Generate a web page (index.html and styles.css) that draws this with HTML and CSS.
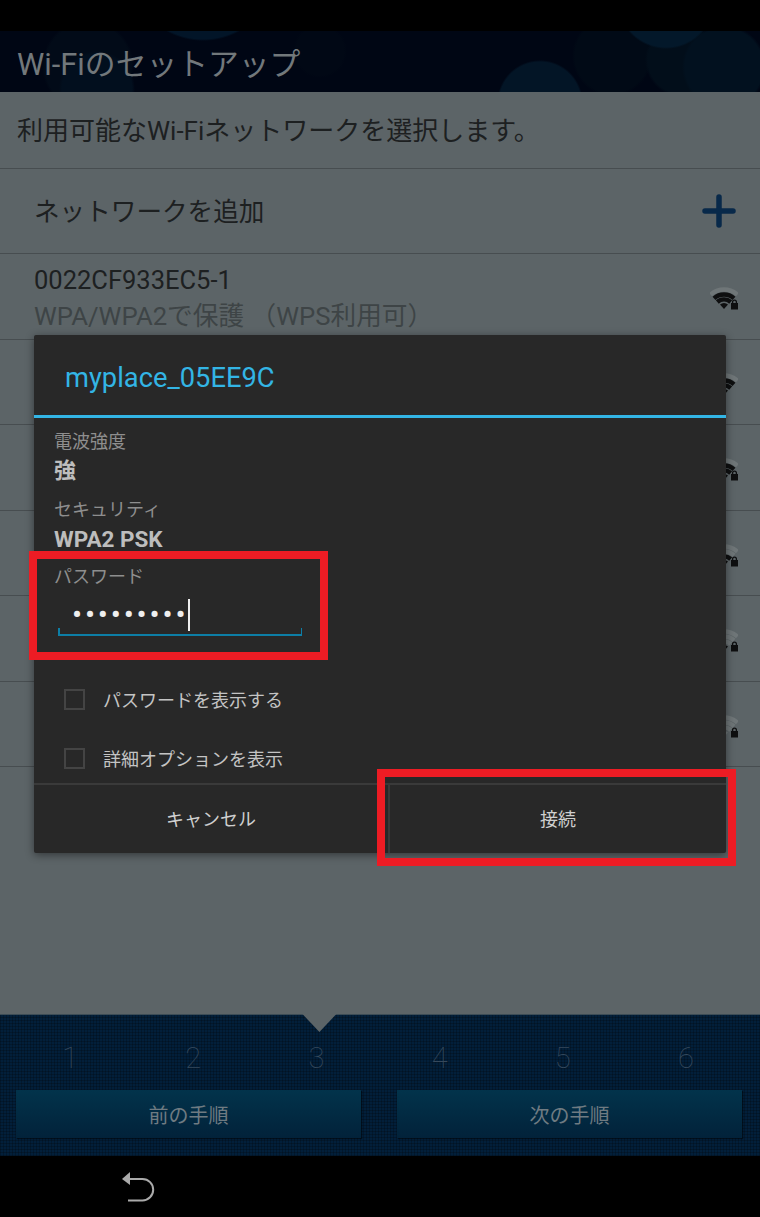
FILE: index.html
```html
<!DOCTYPE html>
<html lang="ja">
<head>
    <meta charset="utf-8">
    <title>Wi-Fiのセットアップ</title>
    <link rel="stylesheet" href="styles.css">
</head>
<body>
    <svg class="defs" width="0" height="0">
        <defs>
            <g id="lock">
                <path class="lock-body" d="M21 16h7v6.5h-7z"/>
                <path class="lock-loop" d="M22.6 16.5v-1.4a1.9 1.9 0 0 1 3.8 0v1.4"/>
            </g>
        </defs>
    </svg>

    <div class="status-bar"></div>
    <header class="app-header"><h1>Wi-Fiのセットアップ</h1></header>

    <main class="content">
        <p class="intro">利用可能なWi-Fiネットワークを選択します。</p>
        <div class="add-row">
            <span>ネットワークを追加</span>
            <svg class="plus" width="34" height="34" viewBox="0 0 34 34"><path d="M3 17h28M17 3v28"/></svg>
        </div>
        <div class="net-row">
            <div class="net-text">
                <div class="net-name">0022CF933EC5-1</div>
                <div class="net-sub">WPA/WPA2で保護 （WPS利用可）</div>
            </div>
            <svg class="wifi" viewBox="0 0 28 24"><path d="M.6 7.6a20 20 0 0 1 26.8 0"/><path class="on" d="M4 11.3a15 15 0 0 1 20 0"/><path class="on" d="M7.3 15a10 10 0 0 1 13.4 0"/><path class="on fill" d="M14 22l-4-4.5a6 6 0 0 1 8 0z"/><use href="#lock"/></svg>
        </div>
        <div class="net-row">
            <svg class="wifi" viewBox="0 0 28 24"><path d="M.6 7.6a20 20 0 0 1 26.8 0"/><path class="on" d="M4 11.3a15 15 0 0 1 20 0"/><path class="on" d="M7.3 15a10 10 0 0 1 13.4 0"/><path class="on fill" d="M14 22l-4-4.5a6 6 0 0 1 8 0z"/></svg>
        </div>
        <div class="net-row">
            <svg class="wifi" viewBox="0 0 28 24"><path d="M.6 7.6a20 20 0 0 1 26.8 0"/><path class="on" d="M4 11.3a15 15 0 0 1 20 0"/><path class="on" d="M7.3 15a10 10 0 0 1 13.4 0"/><path class="on fill" d="M14 22l-4-4.5a6 6 0 0 1 8 0z"/><use href="#lock"/></svg>
        </div>
        <div class="net-row">
            <svg class="wifi" viewBox="0 0 28 24"><path d="M.6 7.6a20 20 0 0 1 26.8 0"/><path d="M4 11.3a15 15 0 0 1 20 0"/><path class="on" d="M7.3 15a10 10 0 0 1 13.4 0"/><path class="on fill" d="M14 22l-4-4.5a6 6 0 0 1 8 0z"/><use href="#lock"/></svg>
        </div>
        <div class="net-row">
            <svg class="wifi" viewBox="0 0 28 24"><path d="M.6 7.6a20 20 0 0 1 26.8 0"/><path d="M4 11.3a15 15 0 0 1 20 0"/><path d="M7.3 15a10 10 0 0 1 13.4 0"/><path class="on fill" d="M14 22l-4-4.5a6 6 0 0 1 8 0z"/><use href="#lock"/></svg>
        </div>
        <div class="net-row">
            <svg class="wifi" viewBox="0 0 28 24"><path d="M.6 7.6a20 20 0 0 1 26.8 0"/><path d="M4 11.3a15 15 0 0 1 20 0"/><path d="M7.3 15a10 10 0 0 1 13.4 0"/><path class="fill" d="M14 22l-4-4.5a6 6 0 0 1 8 0z"/><use href="#lock"/></svg>
        </div>
    </main>

    <footer class="wizard">
        <div class="steps">
            <span>1</span>
            <span>2</span>
            <span class="current">3</span>
            <span>4</span>
            <span>5</span>
            <span>6</span>
        </div>
        <div class="wizard-buttons">
            <button>前の手順</button>
            <button>次の手順</button>
        </div>
    </footer>

    <nav class="nav-bar">
        <svg class="back" width="36" height="32" viewBox="0 0 36 32">
            <path class="back-head" d="M1 8l8-7v13z"/>
            <path class="back-line" d="M8 8h13.5a10.7 10.7 0 0 1 0 21.4H7"/>
        </svg>
    </nav>

    <section class="dialog">
        <h2 class="dialog-title">myplace_05EE9C</h2>
        <div class="dialog-body">
            <div class="field-label">電波強度</div>
            <div class="field-value big">強</div>
            <div class="field-label sec">セキュリティ</div>
            <div class="field-value psk">WPA2 PSK</div>
            <div class="field-label pw">パスワード</div>
            <div class="pw-input"><span class="pw-dots">•••••••••</span><span class="caret"></span></div>
            <label class="check first"><span class="box"></span>パスワードを表示する</label>
            <label class="check"><span class="box"></span>詳細オプションを表示</label>
        </div>
        <div class="dialog-buttons">
            <button class="cancel">キャンセル</button>
            <button class="connect">接続</button>
        </div>
    </section>

    <div class="callout callout-password"></div>
    <div class="callout callout-connect"></div>
</body>
</html>
```

FILE: styles.css
```css
* { box-sizing: border-box; }
html, body { margin: 0; height: 100%; }
body {
    display: flex; flex-direction: column; height: 1217px; overflow: hidden; position: relative;
    font-family: Roboto, "Noto Sans CJK JP", sans-serif; background-color: #5c6467; color: #1d2021;
}
button { font: inherit; border: none; padding: 0; background: none; }
.defs { position: absolute; }

.status-bar { height: 31px; background-color: #000; }

.app-header {
    height: 61px; padding-left: 17px; display: flex; align-items: center;
    background-color: #000614;
    background-image:
        radial-gradient(circle at 540px 72px, #031526 41px, transparent 43px),
        radial-gradient(circle at 666px -31px, #03182a 47px, transparent 49px),
        radial-gradient(circle at 724px 36px, #02111f 39px, transparent 42px),
        radial-gradient(circle at 682px 29px, #020e1a 34px, transparent 37px),
        radial-gradient(circle at 612px 25px, #010a16 37px, transparent 40px),
        radial-gradient(circle at 203px -65px, #021528 73px, transparent 75px),
        radial-gradient(circle at 97px 58px, #020f1e 35px, transparent 38px),
        radial-gradient(circle at 88px 35px, #020b18 43px, transparent 46px),
        radial-gradient(circle at 320px 20px, #010815 24px, transparent 27px);
}
.app-header h1 { margin: 0; font-size: 30.8px; font-weight: 400; color: #72787b; }

.content { flex: 1; }
.intro {
    margin: 0; height: 77px; padding: 0 0 4px 17px; display: flex; align-items: center;
    font-size: 26px; border-bottom: 1px solid #474d50;
}
.add-row {
    height: 85px; padding: 0 24px 4px 34px; display: flex; align-items: center; justify-content: space-between;
    font-size: 25.6px; border-bottom: 1px solid #474d50;
}
.plus { margin-top: 3px; fill: none; stroke: #08294a; stroke-width: 5.5; stroke-linecap: round; }
.net-row {
    height: 85.5px; padding: 0 22px 0 34px; display: flex; align-items: center; justify-content: space-between;
    border-bottom: 1px solid #474d50;
}
.net-row .wifi { margin-left: auto; }
.net-text { padding-top: 5px; }
.net-name { font-size: 25.5px; line-height: 35px; }
.net-sub { font-size: 25.7px; line-height: 36px; color: #3e4446; }

.wifi { width: 28px; height: 24px; margin-top: 6px; fill: none; stroke: #6f7678; stroke-width: 4.4; }
.wifi .on { stroke: #0e0f10; }
.wifi .fill { stroke: none; fill: #6f7678; }
.wifi .on.fill { fill: #0e0f10; }
.wifi use { stroke: none; }
.lock-body { fill: #0e0f10; stroke: none; }
.lock-loop { fill: none; stroke: #0e0f10; stroke-width: 1.3; }

.wizard {
    height: 142px; border-top: 1px solid #3c4c56; padding: 0 18px 0 16px; position: relative;
    background-color: #021f3a;
    background-image:
        repeating-linear-gradient(90deg, rgba(0,0,0,.22) 0 1px, transparent 1px 3px),
        repeating-linear-gradient(0deg, rgba(0,0,0,.22) 0 1px, transparent 1px 3px);
}
.steps {
    height: 75px; padding: 26px 0 0; margin: 0 -5.5px 0 -7.5px;
    display: grid; grid-template-columns: repeat(6, 1fr);
    text-align: center; font-size: 29px; font-weight: 100; line-height: 34px; color: #36495c;
}
.steps span { position: relative; }
.current::before {
    content: ""; position: absolute; left: 50%; top: -27px; width: 34px; height: 18px; margin-left: -14px;
    background-color: #5c6467; clip-path: polygon(0 0, 100% 0, 50% 100%);
}
.wizard-buttons { display: flex; justify-content: space-between; }
.wizard-buttons button {
    width: 345px; height: 48px; font-size: 20px; color: #6f7b82;
    background: linear-gradient(#02334b, #02223a);
    box-shadow: 1px 1px 1px rgba(0,0,0,.5);
}

.nav-bar { height: 61px; background-color: #000; padding: 15px 0 0 121px; }
.back { display: block; }
.back-head { fill: #aaa; }
.back-line { fill: none; stroke: #aaa; stroke-width: 2; }

.dialog {
    position: absolute; left: 34px; top: 335px; width: 692px; height: 518px;
    display: flex; flex-direction: column;
    background-color: #282828; box-shadow: 0 2px 8px rgba(0,0,0,.45); border-radius: 2px;
}
.dialog-title {
    margin: 0; height: 83px; padding: 5px 0 0 31px; display: flex; align-items: center;
    font-size: 27.3px; font-weight: 400; color: #33b5e5; border-bottom: 3px solid #33b5e5;
}
.dialog-body { flex: 1; padding: 12px 0 0 20px; }
.field-label { font-size: 18px; line-height: 24px; color: #8e8e8e; }
.field-value { font-size: 22.5px; font-weight: 700; line-height: 30px; color: #bdbdbd; }
.field-value.big { font-size: 22px; line-height: 34px; }
.field-label.sec { margin-top: 10px; }
.field-value.psk { margin-top: 2px; }
.field-label.pw { margin-top: 11px; }
.pw-input {
    width: 244px; height: 44px; margin: 3px 0 0 4px; padding: 4px 0 0 14px; display: flex; align-items: center;
    border-bottom: 2px solid #0d7ea6; position: relative;
}
.pw-input::before, .pw-input::after {
    content: ""; position: absolute; bottom: 0; width: 1.5px; height: 6px; background-color: #0d7ea6;
}
.pw-input::before { left: 0; }
.pw-input::after { right: 0; }
.pw-dots { font-size: 30px; line-height: 34px; letter-spacing: 2.8px; color: #eee; margin-right: -3px; }
.caret { width: 1.5px; height: 32px; background-color: #eee; margin-left: 3px; }
.check {
    display: flex; align-items: center; height: 20px; padding-left: 10px;
    font-size: 18px; color: #c4c4c4;
}
.check.first { margin: 53px 0 39px; }
.box { width: 21px; height: 21px; margin-right: 18px; border: 2px solid #444; }
.dialog-buttons { height: 70px; display: flex; border-top: 2px solid #3a3a3a; }
.dialog-buttons button { font-size: 18px; color: #cfcfcf; padding-bottom: 3px; }
.cancel { width: 354px; }
.connect { flex: 1; border-left: 2px solid #3a3a3a; }

.callout { position: absolute; border: 8px solid #ed1c24; }
.callout-password { left: 29px; top: 551px; width: 299px; height: 109px; }
.callout-connect { left: 377px; top: 769px; width: 359px; height: 97px; }
```
